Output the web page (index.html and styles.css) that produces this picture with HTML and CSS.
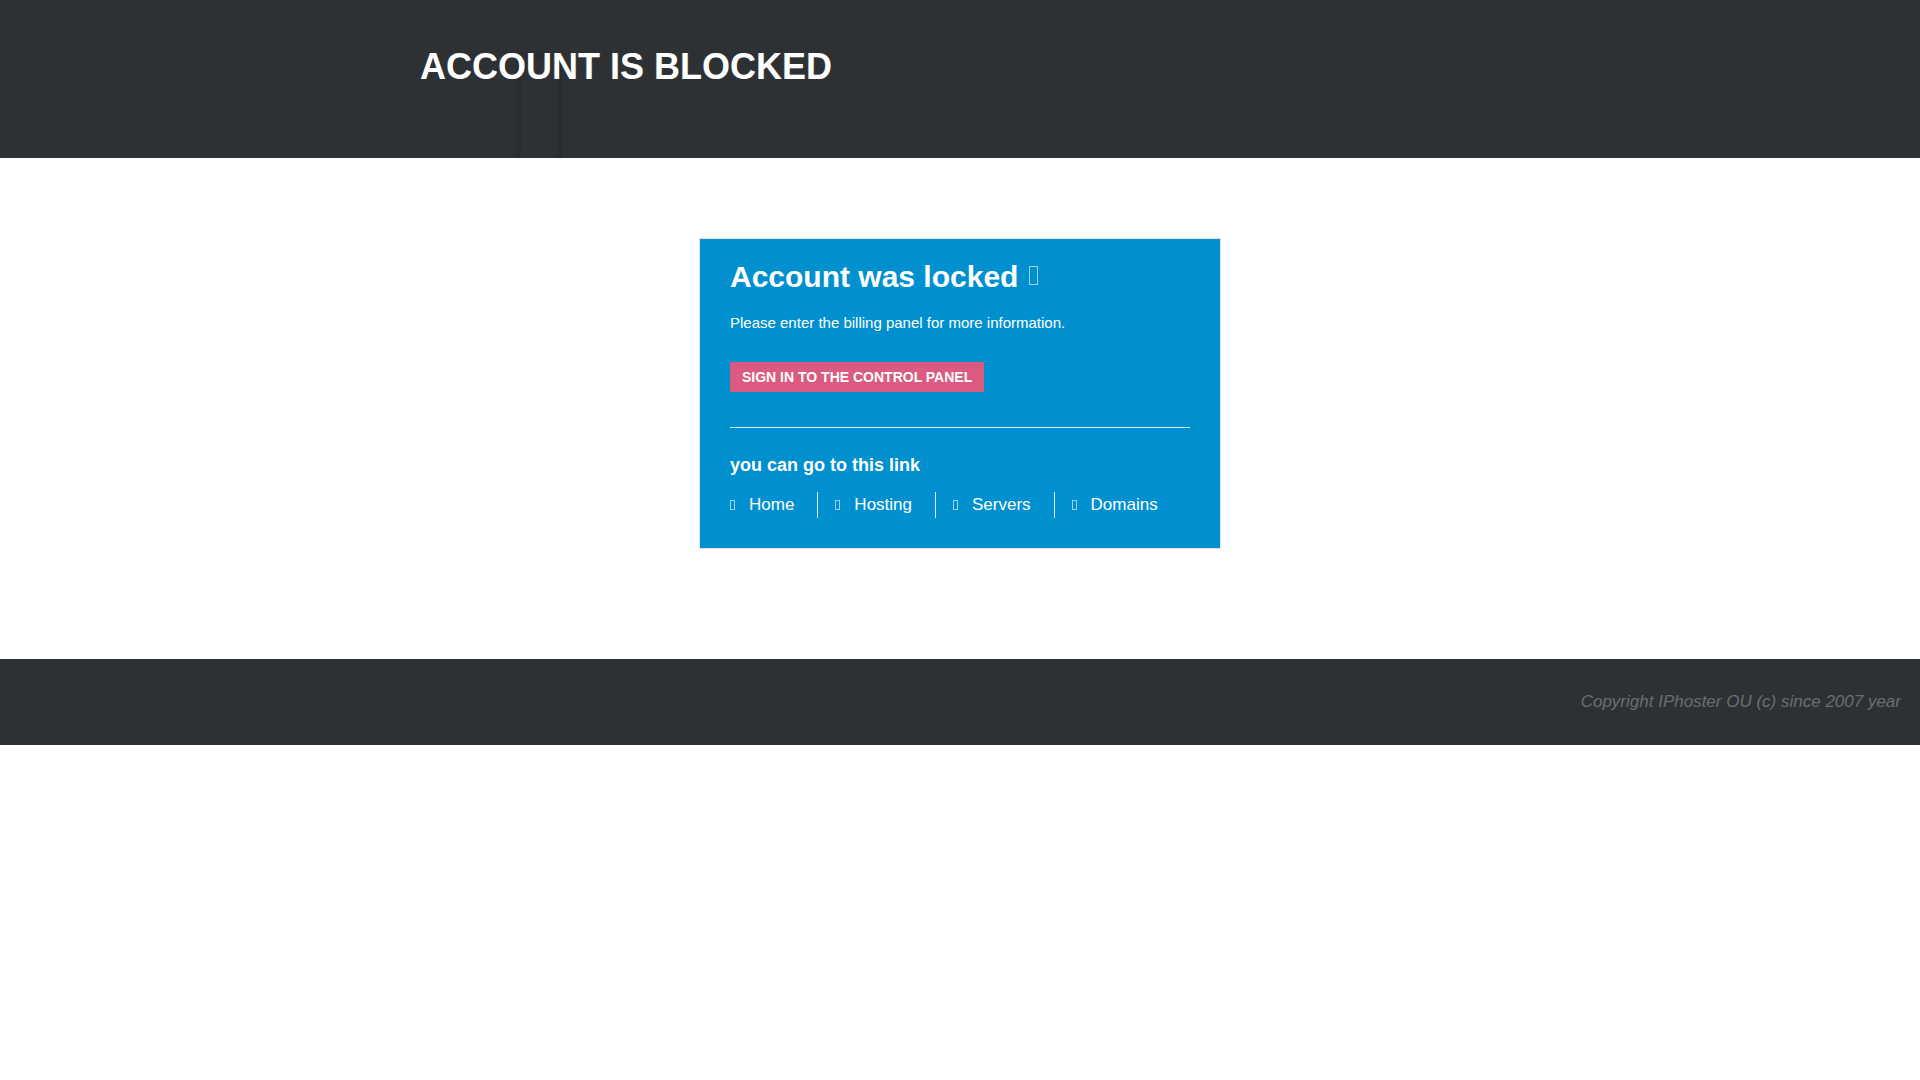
FILE: index.html
```html
<!DOCTYPE html>
<html lang="en">
<head>
<meta charset="utf-8">
<title>Account is blocked</title>
<link rel="stylesheet" href="styles.css">
</head>
<body>
<header class="top">
  <div class="top-deco"></div>
  <h1 class="top-title">ACCOUNT IS BLOCKED</h1>
</header>
<main class="main">
  <section class="card">
    <h2 class="card-title">Account was locked<span class="tofu tofu-big"></span></h2>
    <p class="card-text">Please enter the billing panel for more information.</p>
    <a class="btn" href="#">SIGN IN TO THE CONTROL PANEL</a>
    <hr class="card-rule">
    <h3 class="card-sub">you can go to this link</h3>
    <ul class="links">
      <li class="links-item"><span class="tofu"></span><a href="#">Home</a></li>
      <li class="links-item"><span class="tofu"></span><a href="#">Hosting</a></li>
      <li class="links-item"><span class="tofu"></span><a href="#">Servers</a></li>
      <li class="links-item links-last"><span class="tofu"></span><a href="#">Domains</a></li>
    </ul>
  </section>
</main>
<footer class="foot">
  <p class="foot-text">Copyright IPhoster OU (c) since 2007 year</p>
</footer>
</body>
</html>
```
FILE: styles.css
```css
* { box-sizing: border-box; }
html, body { margin: 0; padding: 0; background: #ffffff; }
body { font-family: "Liberation Sans", Arial, sans-serif; color: #ffffff; }

.top {
  position: relative;
  height: 158px;
  background: #2e3134;
  padding: 49px 0 0 420px;
}
.top-deco {
  position: absolute;
  left: 516px;
  top: 53px;
  width: 46px;
  height: 105px;
  border-left: 5px solid #2a2d30;
  border-right: 5px solid #2a2d30;
  border-top: 7px solid #2b2e31;
}
.top-title {
  position: relative;
  margin: 0;
  font-size: 36px;
  line-height: 36px;
  font-weight: bold;
  color: #ffffff;
}

.main { padding-top: 80px; }
.card {
  width: 522px;
  margin: 0 auto;
  background: #0090cf;
  border: 1px solid #e4e4e4;
  padding: 21px 30px 30px 30px;
}
.card-title {
  margin: 0;
  font-size: 30px;
  line-height: 33px;
  font-weight: bold;
}
.tofu {
  display: inline-block;
  width: 5px;
  height: 10px;
  border: 1px solid rgba(255,255,255,0.6);
  margin-right: 14px;
}
.tofu-big {
  width: 9px;
  height: 19px;
  margin: 0 0 2px 11px;
}
.card-text {
  margin: 20px 0 0 0;
  font-size: 15px;
  line-height: 20px;
}
.btn {
  display: inline-block;
  margin-top: 29px;
  padding: 7px 12px;
  background: #db5a7f;
  color: #ffffff;
  font-size: 14px;
  line-height: 16px;
  font-weight: bold;
  text-decoration: none;
}
.card-rule {
  margin: 35px 0 0 0;
  border: 0;
  border-top: 1px solid rgba(255,255,255,0.85);
  height: 0;
}
.card-sub {
  margin: 26px 0 0 0;
  font-size: 18px;
  line-height: 22px;
  font-weight: bold;
}
.links {
  list-style: none;
  margin: 16px 0 0 0;
  padding: 0;
  display: flex;
}
.links-item {
  font-size: 17px;
  line-height: 26px;
  padding: 0 23px 0 17px;
  border-right: 1px solid rgba(255,255,255,0.85);
}
.links-item:first-child { padding-left: 0; }
.links-last { border-right: 0; }
.links-item a { color: #ffffff; text-decoration: none; }

.foot {
  margin-top: 110px;
  height: 86px;
  background: #2e3134;
  padding: 0 19px;
}
.foot-text {
  margin: 0;
  text-align: right;
  font-style: italic;
  font-size: 17px;
  line-height: 85px;
  color: #6b6e71;
}
```
